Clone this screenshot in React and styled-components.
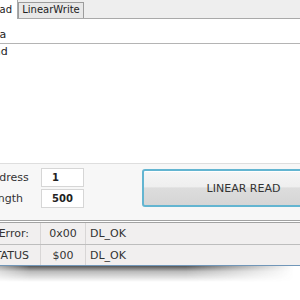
import React from "react";
import styled, { createGlobalStyle } from "styled-components";

const GlobalStyle = createGlobalStyle`
  html, body { margin: 0; padding: 0; background: #ffffff; overflow: hidden; }
  body { font-family: "DejaVu Sans", Verdana, sans-serif; color: #333333; }
  * { box-sizing: border-box; }
`;

const Viewport = styled.div`
  width: 300px;
  height: 300px;
  overflow: hidden;
  background: #ffffff;
`;

const Window = styled.div`
  margin-left: -54px;
  width: 430px;
  display: flex;
  flex-direction: column;
`;

const TabStrip = styled.div`
  height: 19px;
  background: #eeeeee;
  border-bottom: 1px solid #a9a9a9;
  display: flex;
  align-items: flex-end;
  padding-left: 4px;
`;

const Tab = styled.div`
  width: ${(p) => (p.$active ? 68 : 66)}px;
  height: ${(p) => (p.$active ? 20 : 16)}px;
  margin-bottom: ${(p) => (p.$active ? -1 : 0)}px;
  background: ${(p) => (p.$active ? "#ffffff" : "#e8e8e8")};
  border: 1px solid ${(p) => (p.$active ? "#a9a9a9" : "#9c9c9c")};
  border-bottom: none;
  font-size: 10px;
  line-height: ${(p) => (p.$active ? 20 : 14)}px;
  text-align: center;
  white-space: nowrap;
  color: #222;
`;

const Content = styled.div`
  height: 144px;
  background: #ffffff;
  padding-top: 8px;
`;

const ListRow = styled.div`
  height: ${(p) => (p.$header ? 17 : 16)}px;
  line-height: 16px;
  padding-left: 34px;
  font-size: 11px;
  color: #222;
  border-bottom: ${(p) => (p.$header ? "1px solid #b4b4b4" : "none")};
`;

const Panel = styled.div`
  height: 57px;
  border-top: 1px solid #dedede;
  background: #f7f7f7;
  display: flex;
  align-items: flex-start;
  padding: 4px 0 0 39px;
`;

const FormGrid = styled.div`
  display: grid;
  grid-template-columns: 56px 43px;
  grid-auto-rows: 19px;
  row-gap: 2px;
  align-items: center;
`;

const Label = styled.span`
  font-size: 11px;
  color: #333;
  white-space: nowrap;
`;

const ValueBox = styled.div`
  height: 19px;
  border: 1px solid #d6d6d6;
  background: #ffffff;
  padding-left: 10px;
  font-size: 10px;
  font-weight: bold;
  line-height: 17px;
  color: #222;
`;

const ActionButton = styled.button`
  margin: 1px 0 0 58px;
  width: 203px;
  height: 38px;
  border: 2px solid #63b5d1;
  border-radius: 3px;
  background: linear-gradient(#f6f6f6 0%, #efefef 46%, #dddddd 50%, #d5d5d5 100%);
  box-shadow: inset 0 1px 0 #ffffff;
  font-family: "DejaVu Sans", Verdana, sans-serif;
  font-size: 11px;
  color: #333;
  padding: 0;
`;

const Divider = styled.div`
  height: 3px;
  border-top: 1px solid #a2a2a2;
  border-bottom: 1px solid #a2a2a2;
  background: #ffffff;
`;

const StatusRow = styled.div`
  display: grid;
  grid-template-columns: 95px 45px 1fr;
  height: ${(p) => (p.$last ? 21 : 22)}px;
  background: #f1efef;
  border-bottom: 1px solid ${(p) => (p.$last ? "#7196b8" : "#bdbdbd")};
  font-size: 11px;
  color: #333;
`;

const Cell = styled.div`
  display: flex;
  align-items: center;
  white-space: nowrap;
  overflow: hidden;
  border-right: ${(p) => (p.$last ? "none" : "1px solid #d8d6d6")};
  justify-content: ${(p) => p.$align || "flex-start"};
  padding: ${(p) =>
    p.$align === "flex-end" ? "0 11px 0 0" : p.$align === "center" ? "0" : "0 0 0 4px"};
`;

const Shadow = styled.div`
  height: 16px;
  background: linear-gradient(rgba(30, 30, 30, 0.75) 0%, rgba(60, 60, 60, 0.35) 35%, rgba(255, 255, 255, 0) 100%);
  -webkit-mask-image: linear-gradient(to right, rgba(0,0,0,0.5) 0%, #000 10%, #000 62%, transparent 98%);
  mask-image: linear-gradient(to right, rgba(0,0,0,0.5) 0%, #000 10%, #000 62%, transparent 98%);
`;

const statusRows = [
  { name: "Last Error:", code: "0x00", text: "DL_OK" },
  { name: "DL_STATUS", code: "$00", text: "DL_OK" },
];

export default function App() {
  return (
    <>
      <GlobalStyle />
      <Viewport>
        <Window>
          <TabStrip>
            <Tab $active>LinearRead</Tab>
            <Tab>LinearWrite</Tab>
          </TabStrip>
          <Content>
            <ListRow $header>Data</ListRow>
            <ListRow>Read</ListRow>
          </Content>
          <Panel>
            <FormGrid>
              <Label>Address</Label>
              <ValueBox>1</ValueBox>
              <Label>Length</Label>
              <ValueBox>500</ValueBox>
            </FormGrid>
            <ActionButton>LINEAR READ</ActionButton>
          </Panel>
          <Divider />
          {statusRows.map((r, i) => (
            <StatusRow key={r.name} $last={i === statusRows.length - 1}>
              <Cell $align="flex-end">{r.name}</Cell>
              <Cell $align="center">{r.code}</Cell>
              <Cell $last>{r.text}</Cell>
            </StatusRow>
          ))}
        </Window>
        <Shadow />
      </Viewport>
    </>
  );
}
